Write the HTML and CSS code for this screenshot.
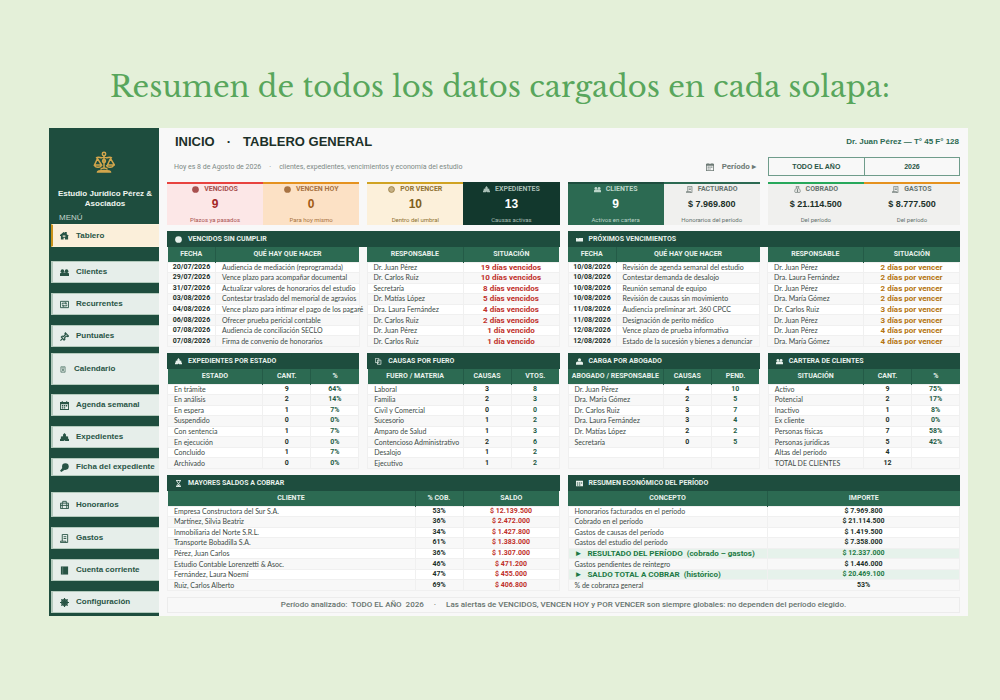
FILE: index.html
```html
<!DOCTYPE html>
<html lang="es">
<head>
<meta charset="utf-8">
<title>Tablero general</title>
<link rel="stylesheet" href="styles.css">
</head>
<body>
<svg class="sprite" aria-hidden="true">
  <symbol id="scales" viewBox="0 0 22 22"><g fill="none" stroke="currentColor" stroke-width="1.5"><circle cx="11" cy="3" r="1.7"/><path d="M11 5v12M3 7c3-2 5 1 8-1 3 2 5-1 8 1M4.500 7.500 1.500 14h7zM17.500 7.500l-3 6.500h7zM1.500 14c.5 3 6.500 3 7 0M13.500 14c.5 3 6.500 3 7 0M7.500 18.500c1-2 6-2 7 0M4.500 21c0-2 13-2 13 0z"/><circle cx="11" cy="10" r="1.500"/></g></symbol>
  <symbol id="home" viewBox="0 0 10 10"><path fill-rule="evenodd" d="M0 4.500 4 1l1.500 1V1h2v2.500L10 5.500H9v4H1v-4H0zM3 5v1.500h3V5zM4 7.500v2h1.500v-2z"/></symbol>
  <symbol id="people" viewBox="0 0 10 10"><circle cx="2.700" cy="3.500" r="2"/><circle cx="7.300" cy="3.500" r="2"/><path d="M0 9V6.500C0 5 2 5 5 5s5 0 5 1.500V9z"/></symbol>
  <symbol id="repeat" viewBox="0 0 10 10"><path fill="none" stroke="currentColor" d="M.5 1.500h9v7h-9z"/><path fill="none" stroke="currentColor" d="M2.500 5V3.500h4M7.500 5v1.500h-4"/><path d="m6 2 2 1.500L6 5zM4 5 2 6.500 4 8z"/></symbol>
  <symbol id="pin" viewBox="0 0 10 10"><path fill="none" stroke="currentColor" stroke-width="1.300" d="m6 1 3.500 3.500-1 .5-1.500-.5-2 2 .5 1.500-1 1L1.500 5.500l1-1 1.500.5 2-2L5.500 2zM3 7 .5 9.500"/></symbol>
  <symbol id="sheet" viewBox="0 0 10 10"><path fill="none" stroke="currentColor" d="M1.500.5h7v9h-7zM3 2.500h4M3.500 4l3 4m0-4-3 4"/></symbol>
  <symbol id="calendar" viewBox="0 0 10 10"><path fill-rule="evenodd" d="M2 0h1v1h4V0h1v1h2v9H0V1h2zM1 3.500V9h8V3.500zM2 4.500h1.500V6H2zm2.250 0h1.500V6h-1.500zm2.250 0H8V6H6.500zM2 7h1.500v1.200H2zm2.250 0h1.500v1.200h-1.500z"/></symbol>
  <symbol id="court" viewBox="0 0 10 10"><path d="M5 0 6.800 2 6.500 3.500 9 4v2l1 1v2H6L5 8 4 9H0V7l1-1V4l2.500-.5L3.200 2z"/></symbol>
  <symbol id="search" viewBox="0 0 10 10"><circle cx="6" cy="4" r="3.700"/><path d="M3.500 4.500 0 8.500 1.500 10 6 7z"/></symbol>
  <symbol id="case" viewBox="0 0 10 10"><path fill="none" stroke="currentColor" d="M.5 3.500h9v6h-9zM3 3.500v-2h4v2M.5 6h9M2.500 3.500v6M7.500 3.500v6"/></symbol>
  <symbol id="receipt" viewBox="0 0 10 10"><path fill="none" stroke="currentColor" d="M2.500 8V.5h6v9H.5V8h6v1.500M4 3h3M4 5h3"/></symbol>
  <symbol id="book" viewBox="0 0 10 10"><path d="M1 .5h8v9H1z"/><path fill="none" stroke="#e6eeea" stroke-width=".3" d="M3 1v8"/></symbol>
  <symbol id="gear" viewBox="0 0 10 10"><circle cx="5" cy="5" r="3" fill="none" stroke="currentColor" stroke-width="1.600"/><path fill="none" stroke="currentColor" stroke-width="1.300" d="M5 0v10M0 5h10M1.500 1.500l7 7M8.500 1.500l-7 7"/></symbol>
  <symbol id="dot" viewBox="0 0 10 10"><circle cx="5" cy="5" r="4.800"/></symbol>
  <symbol id="ring" viewBox="0 0 10 10"><circle cx="5" cy="5" r="4.200" fill-opacity=".5" stroke="currentColor"/></symbol>
  <symbol id="bag" viewBox="0 0 10 10"><path fill="none" stroke="currentColor" d="M3.500 3 3 .5h4L6.500 3c3 2 3 6.500 1 6.500h-5c-2 0-2-4.500 1-6.500zM3.500 3h3M5 4.500v4M4 5.500h2M4 7.500h2"/></symbol>
  <symbol id="ticket" viewBox="0 0 10 10"><path d="M0 3h2l1 1 1-1h6v5H0z"/></symbol>
  <symbol id="pages" viewBox="0 0 10 10"><path fill="none" stroke="currentColor" d="M.5.5h5v6h-5zM3 8h1.500M3.500 3h5v6h-5z"/></symbol>
  <symbol id="lawyer" viewBox="0 0 10 10"><circle cx="5" cy="2.500" r="2.300"/><path d="M0 9.500V7c0-1.500 2-2 5-2s5 .5 5 2v2.500z"/></symbol>
  <symbol id="hourglass" viewBox="0 0 10 10"><path fill="none" stroke="currentColor" stroke-width="1.300" d="M1.500.7h7M1.500 9.300h7M2.500 1c0 3 5 4.500 5 8M7.500 1c0 3-5 4.500-5 8"/><path d="m5 6 2 3H3z"/></symbol>
  <symbol id="grid" viewBox="0 0 10 10"><path fill-rule="evenodd" d="M0 1h10v8H0zM1.200 3.500V5h2V3.500zm3 0V5h2V3.500zm3 0V5h1.600V3.500zm-6 3V8h2V6.500zm3 0V8h2V6.500z"/></symbol>
</svg>

<h1 class="headline">Resumen de todos los datos cargados en cada solapa:</h1>

<div class="dashboard">
  <aside class="sidebar">
    <div class="brand">
      <svg class="brand-logo"><use href="#scales"/></svg>
      <p class="brand-name">Estudio Jurídico Pérez &amp; Asociados</p>
    </div>
    <p class="menu-label">MENÚ</p>
    <nav class="menu">
      <a class="item active" href="#tablero"><svg class="icon"><use href="#home"/></svg>Tablero</a>
      <a class="item" href="#clientes"><svg class="icon"><use href="#people"/></svg>Clientes</a>
      <a class="item" href="#recurrentes"><svg class="icon"><use href="#repeat"/></svg>Recurrentes</a>
      <a class="item" href="#puntuales"><svg class="icon"><use href="#pin"/></svg>Puntuales</a>
      <a class="item tall" href="#calendario"><svg class="icon"><use href="#sheet"/></svg>Calendario</a>
      <a class="item" href="#agenda"><svg class="icon"><use href="#calendar"/></svg>Agenda semanal</a>
      <a class="item" href="#expedientes"><svg class="icon"><use href="#court"/></svg>Expedientes</a>
      <a class="item short" href="#ficha"><svg class="icon"><use href="#search"/></svg>Ficha del expediente</a>
      <a class="item medium" href="#honorarios"><svg class="icon"><use href="#case"/></svg>Honorarios</a>
      <a class="item" href="#gastos"><svg class="icon"><use href="#receipt"/></svg>Gastos</a>
      <a class="item" href="#cuenta"><svg class="icon"><use href="#book"/></svg>Cuenta corriente</a>
      <a class="item" href="#configuracion"><svg class="icon"><use href="#gear"/></svg>Configuración</a>
    </nav>
  </aside>

  <main class="main" id="tablero">
    <header class="topbar">
      <h2 class="title"><span>INICIO</span><span>·</span><span>TABLERO GENERAL</span></h2>
      <p class="lawyer">Dr. Juan Pérez — T° 45 F° 128</p>
    </header>

    <div class="quarters filters">
      <p class="today"><span>Hoy es 8 de Agosto de 2026</span><span>·</span><span>clientes, expedientes, vencimientos y economía del estudio</span></p>
      <p class="period-label"><svg class="icon"><use href="#calendar"/></svg>Período ▸</p>
      <div class="period">
        <select aria-label="Período"><option>TODO EL AÑO</option></select>
        <select aria-label="Año"><option>2026</option></select>
      </div>
    </div>

    <div class="quarters">
      <div class="pair">
        <section class="kpi overdue"><h3><svg class="icon"><use href="#dot"/></svg>VENCIDOS</h3><strong>9</strong><small>Plazos ya pasados</small></section>
        <section class="kpi today-due"><h3><svg class="icon"><use href="#dot"/></svg>VENCEN HOY</h3><strong>0</strong><small>Para hoy mismo</small></section>
      </div>
      <div class="pair">
        <section class="kpi upcoming"><h3><svg class="icon"><use href="#ring"/></svg>POR VENCER</h3><strong>10</strong><small>Dentro del umbral</small></section>
        <section class="kpi files"><h3><svg class="icon"><use href="#court"/></svg>EXPEDIENTES</h3><strong>13</strong><small>Causas activas</small></section>
      </div>
      <div class="pair">
        <section class="kpi clients"><h3><svg class="icon"><use href="#people"/></svg>CLIENTES</h3><strong>9</strong><small>Activos en cartera</small></section>
        <section class="kpi money"><h3><svg class="icon"><use href="#receipt"/></svg>FACTURADO</h3><strong>$ 7.969.800</strong><small>Honorarios del período</small></section>
      </div>
      <div class="pair">
        <section class="kpi money collected"><h3><svg class="icon"><use href="#bag"/></svg>COBRADO</h3><strong>$ 21.114.500</strong><small>Del período</small></section>
        <section class="kpi money spent"><h3><svg class="icon"><use href="#receipt"/></svg>GASTOS</h3><strong>$ 8.777.500</strong><small>Del período</small></section>
      </div>
    </div>

    <div class="halves">
      <section class="panel">
        <h3 class="band"><svg class="icon"><use href="#dot"/></svg>VENCIDOS SIN CUMPLIR</h3>
        <table>
          <colgroup><col class="w-s"><col><col class="w-gap"><col class="w-m"><col class="w-m"></colgroup>
          <thead><tr><th>FECHA</th><th>QUÉ HAY QUE HACER</th><td class="gap"></td><th>RESPONSABLE</th><th>SITUACIÓN</th></tr></thead>
          <tbody>
            <tr><td class="num">20/07/2026</td><td>Audiencia de mediación (reprogramada)</td><td class="gap"></td><td>Dr. Juan Pérez</td><td class="late">19 días vencidos</td></tr>
            <tr><td class="num">29/07/2026</td><td>Vence plazo para acompañar documental</td><td class="gap"></td><td>Dr. Carlos Ruiz</td><td class="late">10 días vencidos</td></tr>
            <tr><td class="num">31/07/2026</td><td>Actualizar valores de honorarios del estudio</td><td class="gap"></td><td>Secretaría</td><td class="late">8 días vencidos</td></tr>
            <tr><td class="num">03/08/2026</td><td>Contestar traslado del memorial de agravios</td><td class="gap"></td><td>Dr. Matías López</td><td class="late">5 días vencidos</td></tr>
            <tr><td class="num">04/08/2026</td><td>Vence plazo para intimar el pago de los pagaré</td><td class="gap"></td><td>Dra. Laura Fernández</td><td class="late">4 días vencidos</td></tr>
            <tr><td class="num">06/08/2026</td><td>Ofrecer prueba pericial contable</td><td class="gap"></td><td>Dr. Carlos Ruiz</td><td class="late">2 días vencidos</td></tr>
            <tr><td class="num">07/08/2026</td><td>Audiencia de conciliación SECLO</td><td class="gap"></td><td>Dr. Juan Pérez</td><td class="late">1 día vencido</td></tr>
            <tr><td class="num">07/08/2026</td><td>Firma de convenio de honorarios</td><td class="gap"></td><td>Dr. Carlos Ruiz</td><td class="late">1 día vencido</td></tr>
          </tbody>
        </table>
      </section>
      <section class="panel">
        <h3 class="band"><svg class="icon"><use href="#ticket"/></svg>PRÓXIMOS VENCIMIENTOS</h3>
        <table>
          <colgroup><col class="w-s"><col><col class="w-gap"><col class="w-m"><col class="w-m"></colgroup>
          <thead><tr><th>FECHA</th><th>QUÉ HAY QUE HACER</th><td class="gap"></td><th>RESPONSABLE</th><th>SITUACIÓN</th></tr></thead>
          <tbody>
            <tr><td class="num">10/08/2026</td><td>Revisión de agenda semanal del estudio</td><td class="gap"></td><td>Dr. Juan Pérez</td><td class="soon">2 días por vencer</td></tr>
            <tr><td class="num">10/08/2026</td><td>Contestar demanda de desalojo</td><td class="gap"></td><td>Dra. Laura Fernández</td><td class="soon">2 días por vencer</td></tr>
            <tr><td class="num">10/08/2026</td><td>Reunión semanal de equipo</td><td class="gap"></td><td>Dr. Juan Pérez</td><td class="soon">2 días por vencer</td></tr>
            <tr><td class="num">10/08/2026</td><td>Revisión de causas sin movimiento</td><td class="gap"></td><td>Dra. María Gómez</td><td class="soon">2 días por vencer</td></tr>
            <tr><td class="num">11/08/2026</td><td>Audiencia preliminar art. 360 CPCC</td><td class="gap"></td><td>Dr. Carlos Ruiz</td><td class="soon">3 días por vencer</td></tr>
            <tr><td class="num">11/08/2026</td><td>Designación de perito médico</td><td class="gap"></td><td>Dr. Juan Pérez</td><td class="soon">3 días por vencer</td></tr>
            <tr><td class="num">12/08/2026</td><td>Vence plazo de prueba informativa</td><td class="gap"></td><td>Dr. Juan Pérez</td><td class="soon">4 días por vencer</td></tr>
            <tr><td class="num">12/08/2026</td><td>Estado de la sucesión y bienes a denunciar</td><td class="gap"></td><td>Dra. María Gómez</td><td class="soon">4 días por vencer</td></tr>
          </tbody>
        </table>
      </section>
    </div>

    <div class="quarters">
      <section class="panel">
        <h3 class="band"><svg class="icon"><use href="#court"/></svg>EXPEDIENTES POR ESTADO</h3>
        <table>
          <colgroup><col><col class="w-s"><col class="w-s"></colgroup>
          <thead><tr><th>ESTADO</th><th>CANT.</th><th>%</th></tr></thead>
          <tbody>
            <tr><td>En trámite</td><td class="num">9</td><td class="num green">64%</td></tr>
            <tr><td>En análisis</td><td class="num">2</td><td class="num green">14%</td></tr>
            <tr><td>En espera</td><td class="num">1</td><td class="num green">7%</td></tr>
            <tr><td>Suspendido</td><td class="num">0</td><td class="num green">0%</td></tr>
            <tr><td>Con sentencia</td><td class="num">1</td><td class="num green">7%</td></tr>
            <tr><td>En ejecución</td><td class="num">0</td><td class="num green">0%</td></tr>
            <tr><td>Concluido</td><td class="num">1</td><td class="num green">7%</td></tr>
            <tr><td>Archivado</td><td class="num">0</td><td class="num green">0%</td></tr>
          </tbody>
        </table>
      </section>
      <section class="panel">
        <h3 class="band"><svg class="icon"><use href="#pages"/></svg>CAUSAS POR FUERO</h3>
        <table>
          <colgroup><col><col class="w-s"><col class="w-s"></colgroup>
          <thead><tr><th>FUERO / MATERIA</th><th>CAUSAS</th><th>VTOS.</th></tr></thead>
          <tbody>
            <tr><td>Laboral</td><td class="num">3</td><td class="num green">8</td></tr>
            <tr><td>Familia</td><td class="num">2</td><td class="num green">3</td></tr>
            <tr><td>Civil y Comercial</td><td class="num">0</td><td class="num green">0</td></tr>
            <tr><td>Sucesorio</td><td class="num">1</td><td class="num green">2</td></tr>
            <tr><td>Amparo de Salud</td><td class="num">1</td><td class="num green">3</td></tr>
            <tr><td>Contencioso Administrativo</td><td class="num">2</td><td class="num green">6</td></tr>
            <tr><td>Desalojo</td><td class="num">1</td><td class="num green">2</td></tr>
            <tr><td>Ejecutivo</td><td class="num">1</td><td class="num green">2</td></tr>
          </tbody>
        </table>
      </section>
      <section class="panel">
        <h3 class="band"><svg class="icon"><use href="#lawyer"/></svg>CARGA POR ABOGADO</h3>
        <table>
          <colgroup><col><col class="w-s"><col class="w-s"></colgroup>
          <thead><tr><th>ABOGADO / RESPONSABLE</th><th>CAUSAS</th><th>PEND.</th></tr></thead>
          <tbody>
            <tr><td>Dr. Juan Pérez</td><td class="num">4</td><td class="num green">10</td></tr>
            <tr><td>Dra. María Gómez</td><td class="num">2</td><td class="num green">5</td></tr>
            <tr><td>Dr. Carlos Ruiz</td><td class="num">3</td><td class="num green">7</td></tr>
            <tr><td>Dra. Laura Fernández</td><td class="num">3</td><td class="num green">4</td></tr>
            <tr><td>Dr. Matías López</td><td class="num">2</td><td class="num green">2</td></tr>
            <tr><td>Secretaría</td><td class="num">0</td><td class="num green">5</td></tr>
            <tr><td>&nbsp;</td><td></td><td></td></tr>
            <tr><td>&nbsp;</td><td></td><td></td></tr>
          </tbody>
        </table>
      </section>
      <section class="panel">
        <h3 class="band"><svg class="icon"><use href="#people"/></svg>CARTERA DE CLIENTES</h3>
        <table>
          <colgroup><col><col class="w-s"><col class="w-s"></colgroup>
          <thead><tr><th>SITUACIÓN</th><th>CANT.</th><th>%</th></tr></thead>
          <tbody>
            <tr><td>Activo</td><td class="num">9</td><td class="num green">75%</td></tr>
            <tr><td>Potencial</td><td class="num">2</td><td class="num green">17%</td></tr>
            <tr><td>Inactivo</td><td class="num">1</td><td class="num green">8%</td></tr>
            <tr><td>Ex cliente</td><td class="num">0</td><td class="num green">0%</td></tr>
            <tr><td>Personas físicas</td><td class="num">7</td><td class="num green">58%</td></tr>
            <tr><td>Personas jurídicas</td><td class="num">5</td><td class="num green">42%</td></tr>
            <tr><td>Altas del período</td><td class="num">4</td><td></td></tr>
            <tr><td>TOTAL DE CLIENTES</td><td class="num">12</td><td></td></tr>
          </tbody>
        </table>
      </section>
    </div>

    <div class="halves">
      <section class="panel">
        <h3 class="band"><svg class="icon"><use href="#hourglass"/></svg>MAYORES SALDOS A COBRAR</h3>
        <table>
          <colgroup><col><col class="w-s"><col class="w-m"></colgroup>
          <thead><tr><th>CLIENTE</th><th>% COB.</th><th>SALDO</th></tr></thead>
          <tbody>
            <tr><td>Empresa Constructora del Sur S.A.</td><td class="num">53%</td><td class="num debt">$ 12.139.500</td></tr>
            <tr><td>Martínez, Silvia Beatriz</td><td class="num">36%</td><td class="num debt">$ 2.472.000</td></tr>
            <tr><td>Inmobiliaria del Norte S.R.L.</td><td class="num">34%</td><td class="num debt">$ 1.427.800</td></tr>
            <tr><td>Transporte Bobadilla S.A.</td><td class="num">61%</td><td class="num debt">$ 1.383.000</td></tr>
            <tr><td>Pérez, Juan Carlos</td><td class="num">36%</td><td class="num debt">$ 1.307.000</td></tr>
            <tr><td>Estudio Contable Lorenzetti &amp; Asoc.</td><td class="num">46%</td><td class="num debt">$ 471.200</td></tr>
            <tr><td>Fernández, Laura Noemí</td><td class="num">47%</td><td class="num debt">$ 455.000</td></tr>
            <tr><td>Ruiz, Carlos Alberto</td><td class="num">69%</td><td class="num debt">$ 406.800</td></tr>
          </tbody>
        </table>
      </section>
      <section class="panel">
        <h3 class="band"><svg class="icon"><use href="#grid"/></svg>RESUMEN ECONÓMICO DEL PERÍODO</h3>
        <table>
          <colgroup><col><col class="w-l"></colgroup>
          <thead><tr><th>CONCEPTO</th><th>IMPORTE</th></tr></thead>
          <tbody>
            <tr><td>Honorarios facturados en el período</td><td class="num">$ 7.969.800</td></tr>
            <tr><td>Cobrado en el período</td><td class="num">$ 21.114.500</td></tr>
            <tr><td>Gastos de causas del período</td><td class="num">$ 1.419.500</td></tr>
            <tr><td>Gastos del estudio del período</td><td class="num">$ 7.358.000</td></tr>
            <tr class="result"><td><span>►</span>RESULTADO DEL PERÍODO &nbsp;(cobrado – gastos)</td><td class="num">$ 12.337.000</td></tr>
            <tr><td>Gastos pendientes de reintegro</td><td class="num">$ 1.446.000</td></tr>
            <tr class="result"><td><span>►</span>SALDO TOTAL A COBRAR &nbsp;(histórico)</td><td class="num">$ 20.469.100</td></tr>
            <tr><td>% de cobranza general</td><td class="num">53%</td></tr>
          </tbody>
        </table>
      </section>
    </div>

    <footer class="note"><span>Período analizado: &nbsp;TODO EL AÑO &nbsp;2026</span><span>·</span><span>Las alertas de VENCIDOS, VENCEN HOY y POR VENCER son siempre globales: no dependen del período elegido.</span></footer>
  </main>
</div>
</body>
</html>
```
FILE: styles.css
```css
* { box-sizing: border-box; }

body {
  margin: 0;
  min-height: 100vh;
  padding: 63px 32px 0 49px;
  background: #e4f0d9;
  color: #2b3a35;
  font-family: Roboto, "Liberation Sans", sans-serif;
  font-size: 7px;
  line-height: 10px;
}

h1, h2, h3, p { margin: 0; font-size: inherit; }

.sprite { position: absolute; width: 0; height: 0; }
.icon { flex: none; width: 8px; height: 8px; fill: currentColor; }

.headline {
  margin-bottom: 17px;
  padding-right: 17px;
  color: #58a65c;
  font: 400 29px/48px "Libre Baskerville", "Liberation Serif", serif;
  text-align: center;
}

.dashboard { display: flex; background: #f8f8f8; }

/* Sidebar */
.sidebar {
  flex: none;
  width: 110px;
  padding: 22px 0 3px 2px;
  background: #1e4d3e;
  color: #eef5f0;
  font-family: "Liberation Sans", Arial, sans-serif;
}
.brand { display: flex; flex-direction: column; align-items: center; gap: 15px; }
.brand-logo { width: 24px; height: 24px; padding-right: 2px; color: #d3a64c; }
.brand-name { padding: 0 6px; font-size: 8px; font-weight: 700; text-align: center; }
.menu-label { padding: 4px 0 1px 8px; color: #c4d5cb; font-size: 8px; }

.menu { display: flex; flex-direction: column; gap: 10px; }
.item {
  display: flex;
  align-items: center;
  gap: 7px;
  height: 22px;
  padding-left: 7px;
  border: 1px solid #b3cabd;
  border-width: 1px 0 1px 2px;
  background: #e6eeea;
  color: #285445;
  font-size: 8px;
  font-weight: 700;
  text-decoration: none;
  white-space: nowrap;
}
.item .icon { width: 9px; height: 9px; }
.item.active { height: 23px; margin-bottom: 4px; border-color: #fdf3dd; border-left-color: #c8921a; background: #fbefda; }
.item.tall { height: 32px; margin: -4px 0 -1px; gap: 8px; }
.item.tall .icon { width: 6px; height: 7px; }
.item.short { height: 18px; margin-bottom: 6px; }
.item.medium { height: 25px; }

/* Main column */
.main {
  flex: 1;
  display: flex;
  flex-direction: column;
  gap: 6px;
  min-width: 0;
  padding: 5px 8px 3px;
}
.quarters { display: grid; grid-template-columns: repeat(4, minmax(0, 1fr)); gap: 8px; }
.halves { display: grid; grid-template-columns: repeat(2, minmax(0, 1fr)); gap: 8px; }
.pair { display: grid; grid-template-columns: repeat(2, minmax(0, 1fr)); }

.topbar {
  display: flex;
  align-items: center;
  justify-content: space-between;
  padding: 0 1px 0 8px;
  font-family: "Liberation Sans", Arial, sans-serif;
  font-weight: 700;
}
.title { display: flex; gap: 12px; color: #1c3029; font-size: 13px; line-height: 18px; }
.lawyer { color: #2c6a52; font-size: 8px; }

.filters { align-items: center; }
.today { grid-column: span 2; display: flex; gap: 8px; padding-left: 7px; color: #7d8985; }
.period-label {
  display: flex;
  align-items: center;
  justify-content: flex-end;
  gap: 8px;
  padding-right: 4px;
  color: #6d7a75;
  font-size: 8px;
  font-weight: 700;
}
.period { display: grid; grid-template-columns: 1fr 1fr; border: 1px solid #6f9c8b; }
.period select {
  appearance: none;
  height: 17px;
  padding: 0;
  border: 0;
  border-radius: 0;
  background: none;
  color: #285445;
  font: 700 7px "Liberation Sans", Arial, sans-serif;
  text-align: center;
  text-align-last: center;
}
.period select + select { border-left: 1px solid #6f9c8b; }

/* Indicators */
.kpi {
  display: flex;
  flex-direction: column;
  align-items: center;
  height: 43px;
  border-top: 2px solid;
}
.kpi h3 { display: flex; align-items: center; gap: 5px; }
.kpi h3 .icon { width: 7px; height: 7px; }
.kpi strong { font: 700 12px/20px "Liberation Sans", Arial, sans-serif; }
.kpi small { font-size: 6px; line-height: 11px; }
.overdue { border-color: #e8433f; background: #fce7e7; color: #a8504f; }
.overdue strong { color: #a32828; }
.today-due { border-color: #e5921f; background: #fce1c5; color: #a87343; }
.today-due strong { color: #a05a14; }
.upcoming { border-color: #d0a323; background: #fcf0da; color: #8f7232; }
.upcoming strong { color: #80601c; }
.files { border-color: #12382d; background: #12382d; color: #a9bfb6; }
.clients { border-color: #1e4d3e; background: #2c6a52; color: #bcd5c9; }
.files strong, .clients strong { color: #fff; }
.money { border-color: #2c6a52; background: #f0f0ee; color: #66736e; }
.money strong { color: #1c3029; font-size: 9px; }
.collected { border-color: #27a85b; }
.spent { border-color: #e5921f; }

/* Panels */
.band {
  display: flex;
  align-items: center;
  gap: 6px;
  height: 16px;
  padding-left: 8px;
  background: #1e4d3e;
  color: #e8f1ec;
}
.band .icon { width: 7px; height: 7px; }

table { width: 100%; height: 100px; border-collapse: collapse; table-layout: fixed; }
.w-s { width: 48px; }
.w-m { width: 96px; }
.w-l { width: 192px; }
.w-gap { width: 8px; }
th, td { padding: 0; white-space: nowrap; }
th { height: 15px; background: #2c6a52; color: #e8f1ec; text-align: center; }
th + th { border-left: 1px solid #245b47; }
tbody td {
  padding-left: 6px;
  border: 1px solid #f0f0f0;
  color: #3c4a45;
  font-family: Lato, "Liberation Sans", sans-serif;
  line-height: 9px;
}
tbody tr:nth-child(odd) td { background: #fff; }
tbody .num, tbody .late, tbody .soon { padding: 0; font-family: Roboto, "Liberation Sans", sans-serif; font-weight: 700; text-align: center; }
tbody .num { color: #1c3029; }
tbody .late, tbody .soon { font-size: 8px; }
tbody .late, tbody .debt { color: #c0302a; }
tbody .soon { color: #b4740e; }
tbody .green { color: #1e5c45; }
tbody tr td.gap { padding: 0; border-width: 0 1px; background: #f8f8f8; }
tbody tr.result td { background: #e6f2eb; color: #1d7a45; font-family: Roboto, "Liberation Sans", sans-serif; font-size: 8px; font-weight: 700; }
tbody tr.result .num { font-size: 7px; }
.result span { margin-right: 5px; }

.note {
  display: flex;
  justify-content: center;
  gap: 10px;
  padding: 2px;
  border: 1px solid #ececec;
  color: #66736e;
  font-size: 8px;
  font-weight: 500;
  white-space: nowrap;
}
```
